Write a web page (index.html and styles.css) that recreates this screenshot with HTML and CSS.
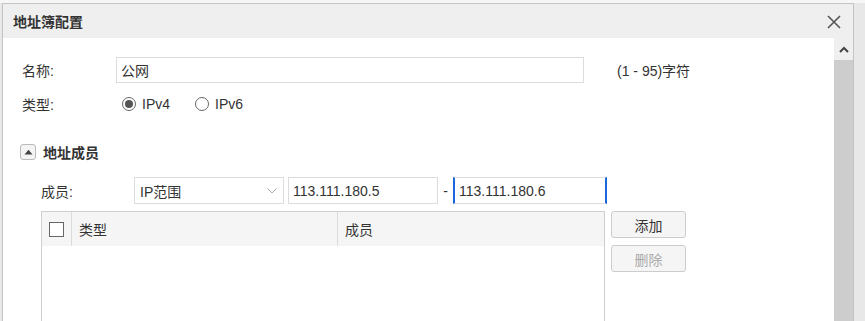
FILE: index.html
```html
<!DOCTYPE html>
<html lang="zh-CN">
<head>
  <meta charset="UTF-8"/>
  <meta name="viewport" content="width=device-width, initial-scale=1"/>
  <title>地址簿配置</title>
  <link rel="stylesheet" href="styles.css">
</head>
<body>
  <div class="page-strip"></div>

  <div class="dialog">
    <!-- Title bar -->
    <div class="dialog-header">
      <span class="dialog-title">地址簿配置</span>
      <span class="dialog-close">
        <svg width="14" height="14" viewBox="0 0 14 14">
          <path d="M1 1 L13 13 M13 1 L1 13" stroke="#555" stroke-width="1.6" fill="none"/>
        </svg>
      </span>
    </div>

    <div class="dialog-main">
      <div class="dialog-body">
        <!-- Name -->
        <div class="form-row">
          <label class="form-label">名称:</label>
          <input type="text" class="text-input name-input" value="公网"/>
          <span class="hint">(1 - 95)字符</span>
        </div>

        <!-- Type -->
        <div class="form-row type-row">
          <label class="form-label">类型:</label>
          <span class="radio checked"></span><span class="radio-text">IPv4</span>
          <span class="radio"></span><span class="radio-text">IPv6</span>
        </div>

        <!-- Members section -->
        <div class="section-title">
          <span class="toggle">
            <svg width="9" height="6" viewBox="0 0 9 6"><path d="M0.5 5.5 L4.5 0.8 L8.5 5.5 Z" fill="#444"/></svg>
          </span>
          <span>地址成员</span>
        </div>

        <div class="member-row">
          <label class="member-label">成员:</label>
          <div class="select">
            <span>IP范围</span>
            <svg width="10" height="6" viewBox="0 0 10 6"><path d="M0.5 0.5 L5 5 L9.5 0.5" stroke="#aaa" stroke-width="1" fill="none"/></svg>
          </div>
          <input type="text" class="text-input ip-input" value="113.111.180.5"/>
          <span class="dash">-</span>
          <input type="text" class="text-input ip-input focused" value="113.111.180.6"/>
        </div>

        <div class="member-table-row">
          <div class="member-table">
            <div class="table-head">
              <div class="col-check"><span class="checkbox"></span></div>
              <div class="col-type">类型</div>
              <div class="col-member">成员</div>
            </div>
            <div class="table-body"></div>
          </div>
          <div class="side-buttons">
            <button class="btn">添加</button>
            <button class="btn" disabled>删除</button>
          </div>
        </div>
      </div>

      <!-- Scrollbar -->
      <div class="scrollbar">
        <div class="scroll-up">
          <svg width="10" height="7" viewBox="0 0 10 7"><path d="M1 6 L5 2 L9 6" stroke="#444" stroke-width="2" fill="none"/></svg>
        </div>
        <div class="scroll-thumb"></div>
      </div>
    </div>
  </div>
</body>
</html>
```

FILE: styles.css
```css
body{
  margin: 0;
  background: #e8e8e8;
  font-family: "Liberation Sans", "Noto Sans CJK SC", sans-serif;
  font-size: 14px;
  color: #333;
  overflow: hidden;
  height: 321px;
}
.page-strip{
  height: 3px;
  background: #f6f6f6;
}
.dialog{
  margin-left: 2px;
  width: 850px;
  border-top: 1px solid #c4c4c4;
  border-left: 1px solid #c4c4c4;
  border-right: 1px solid #c4c4c4;
  background: #efefef;
}
.dialog-header{
  height: 34px;
  display: flex;
  align-items: center;
  justify-content: space-between;
  padding: 0 12px 0 10px;
  background: #efefef;
}
.dialog-title{
  font-weight: bold;
  font-size: 14px;
  color: #333;
}
.dialog-close{
  display: flex;
  align-items: center;
  margin-top: 1px;
}
.dialog-main{
  display: flex;
  height: 283px;
  overflow: hidden;
}
.dialog-body{
  flex: 1;
  background: #fff;
  padding: 19px 0 0 19px;
}
.scrollbar{
  width: 19px;
  display: flex;
  flex-direction: column;
  background: #efefef;
}
.scroll-up{
  height: 22px;
  display: flex;
  align-items: center;
  justify-content: center;
}
.scroll-thumb{
  flex: 1;
  background: #cdcdcd;
}
.form-row{
  display: flex;
  align-items: center;
  height: 26px;
}
.form-label{
  width: 94px;
}
.text-input{
  box-sizing: border-box;
  height: 26px;
  border: 1px solid #dcdcdc;
  padding: 0 4px;
  font-family: inherit;
  font-size: 14px;
  color: #333;
  outline: none;
}
.name-input{
  width: 468px;
}
.hint{
  margin-left: 33px;
}
.type-row{
  margin-top: 8px;
}
.radio{
  box-sizing: border-box;
  width: 14px;
  height: 14px;
  border: 1px solid #666;
  border-radius: 50%;
  margin-left: 6px;
  display: flex;
  align-items: center;
  justify-content: center;
}
.radio.checked::after{
  content: "";
  width: 8px;
  height: 8px;
  border-radius: 50%;
  background: #555;
}
.radio-text{
  margin-left: 6px;
  width: 47px;
}
.radio-text + .radio{
  margin-left: 6px;
}
.section-title{
  display: flex;
  align-items: center;
  gap: 7px;
  margin-top: 25px;
  margin-left: -2px;
  font-weight: bold;
}
.toggle{
  box-sizing: border-box;
  width: 16px;
  height: 16px;
  border: 1px solid #bbb;
  border-radius: 3px;
  background: #f4f4f4;
  display: flex;
  align-items: center;
  justify-content: center;
}
.member-row{
  display: flex;
  align-items: center;
  margin-top: 15px;
  margin-left: 19px;
}
.member-label{
  width: 93px;
}
.select{
  box-sizing: border-box;
  width: 150px;
  height: 27px;
  border: 1px solid #dcdcdc;
  display: flex;
  align-items: center;
  justify-content: space-between;
  padding: 0 6px 0 5px;
}
.ip-input{
  width: 150px;
  height: 27px;
  margin-left: 4px;
}
.dash{
  width: 15px;
  text-align: center;
}
.ip-input.focused{
  width: 154px;
  margin-left: 0;
  border-left: 2px solid #1a66e0;
  border-right: 2px solid #1a66e0;
}
.member-table-row{
  display: flex;
  gap: 6px;
  margin-top: 7px;
  margin-left: 19px;
}
.member-table{
  width: 562px;
  border: 1px solid #cfcfcf;
  border-bottom: none;
}
.table-head{
  display: flex;
  height: 34px;
  background: #f5f5f5;
}
.table-head > div{
  display: flex;
  align-items: center;
  border-right: 1px solid #dcdcdc;
}
.col-check{
  width: 29px;
  justify-content: center;
}
.col-type{
  width: 258px;
  padding-left: 7px;
}
.col-member{
  flex: 1;
  padding-left: 7px;
  border-right: none !important;
}
.checkbox{
  box-sizing: border-box;
  width: 15px;
  height: 15px;
  border: 1px solid #666;
  background: #fff;
}
.table-body{
  height: 120px;
  background: #fff;
}
.side-buttons{
  display: flex;
  flex-direction: column;
  gap: 7px;
}
.btn{
  width: 75px;
  height: 27px;
  border: 1px solid #ccc;
  border-radius: 3px;
  background: #f5f5f5;
  font-family: inherit;
  font-size: 14px;
  color: #333;
}
.btn:disabled{
  color: #aaa;
}
```
